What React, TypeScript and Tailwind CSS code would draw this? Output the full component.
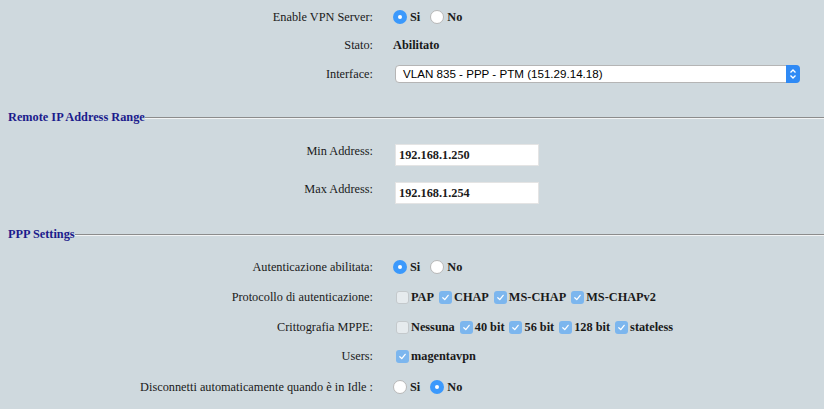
import React from "react";

const Radio = ({ checked, label }: { checked?: boolean; label: string }) => (
  <span className="flex items-center mr-[10px]">
    {checked ? (
      <span className="w-[14px] h-[14px] rounded-full bg-[#3b99fc] flex items-center justify-center">
        <span className="w-[4px] h-[4px] rounded-full bg-white" />
      </span>
    ) : (
      <span className="w-[14px] h-[14px] rounded-full bg-white border border-[#b8b8b8]" />
    )}
    <span className="ml-[3px] font-bold">{label}</span>
  </span>
);

const Check = ({ checked, label }: { checked?: boolean; label: string }) => (
  <span className="flex items-center mr-[5px]">
    {checked ? (
      <span className="w-[13px] h-[13px] rounded-[3px] bg-[#7cb6ee] flex items-center justify-center">
        <svg width="9" height="9" viewBox="0 0 10 10">
          <path d="M2 5.2 L4.2 7.4 L8 2.6" fill="none" stroke="white" strokeWidth="1.4" strokeLinecap="round" strokeLinejoin="round" />
        </svg>
      </span>
    ) : (
      <span className="w-[13px] h-[13px] rounded-[3px] bg-[#e6ebee] border border-[#c4c9cc]" />
    )}
    <span className="ml-[2px] font-bold">{label}</span>
  </span>
);

const Row = ({ label, h, children }: { label: string; h: string; children: React.ReactNode }) => (
  <div className={`flex items-center ${h}`}>
    <div className="w-[373px] text-right">{label}</div>
    <div className="flex items-center pl-[20px]">{children}</div>
  </div>
);

const Section = ({ title }: { title: string }) => (
  <div className="flex items-center h-[18px]">
    <span className="pl-[8px] font-bold text-[#1b1b8c]">{title}</span>
    <div className="flex-1 mt-[2px] border-t border-[#8c8c8c] border-b border-b-[#f2f4f5]" />
  </div>
);

const AddrRow = ({ label, value }: { label: string; value: string }) => (
  <div className="flex items-start h-[22px]">
    <div className="w-[373px] text-right leading-[16px] -mt-[1px]">{label}</div>
    <div className="pl-[22px]">
      <div className="w-[144px] h-[22px] bg-white border border-[#e4e4e4] flex items-center pl-[3px] font-bold">
        {value}
      </div>
    </div>
  </div>
);

export default function App() {
  return (
    <div className="w-[824px] h-[409px] bg-[#cfd9de] text-[#1a1a1a] text-[12.3px] overflow-hidden font-['Liberation_Serif',serif]">
      <div className="pt-[3px]">
        <Row label="Enable VPN Server:" h="h-[28px]">
          <Radio checked label="Si" />
          <Radio label="No" />
        </Row>
        <Row label="Stato:" h="h-[28px]">
          <span className="font-bold">Abilitato</span>
        </Row>
        <Row label="Interface:" h="h-[30px]">
          <div className="ml-[2px] w-[405px] h-[18px] bg-white rounded-[4px] border border-[#b5b5b5] flex items-center justify-between">
            <span className="pl-[7px] font-['Liberation_Sans',sans-serif] text-[11.6px] text-black">
              VLAN 835 - PPP - PTM (151.29.14.18)
            </span>
            <span className="w-[14px] h-[18px] -mr-[1px] rounded-r-[4px] bg-[#2f8af5] flex items-center justify-center">
              <svg width="8" height="12" viewBox="0 0 8 12">
                <path d="M1.5 4.5 L4 2 L6.5 4.5 M1.5 7.5 L4 10 L6.5 7.5" fill="none" stroke="white" strokeWidth="1.3" />
              </svg>
            </span>
          </div>
        </Row>
      </div>
      <div className="mt-[19px]">
        <Section title="Remote IP Address Range" />
      </div>
      <div className="mt-[18px]">
        <AddrRow label="Min Address:" value="192.168.1.250" />
      </div>
      <div className="mt-[16px]">
        <AddrRow label="Max Address:" value="192.168.1.254" />
      </div>
      <div className="mt-[21px]">
        <Section title="PPP Settings" />
      </div>
      <div className="mt-[9px]">
        <Row label="Autenticazione abilitata:" h="h-[30px]">
          <Radio checked label="Si" />
          <Radio label="No" />
        </Row>
        <Row label="Protocollo di autenticazione:" h="h-[30px]">
          <span className="ml-[3px]" />
          <Check label="PAP" />
          <Check checked label="CHAP" />
          <Check checked label="MS-CHAP" />
          <Check checked label="MS-CHAPv2" />
        </Row>
        <Row label="Crittografia MPPE:" h="h-[30px]">
          <span className="ml-[3px]" />
          <Check label="Nessuna" />
          <Check checked label="40 bit" />
          <Check checked label="56 bit" />
          <Check checked label="128 bit" />
          <Check checked label="stateless" />
        </Row>
        <Row label="Users:" h="h-[29px]">
          <span className="ml-[3px]" />
          <Check checked label="magentavpn" />
        </Row>
        <Row label="Disconnetti automaticamente quando è in Idle :" h="h-[32px]">
          <Radio label="Si" />
          <Radio checked label="No" />
        </Row>
      </div>
    </div>
  );
}
